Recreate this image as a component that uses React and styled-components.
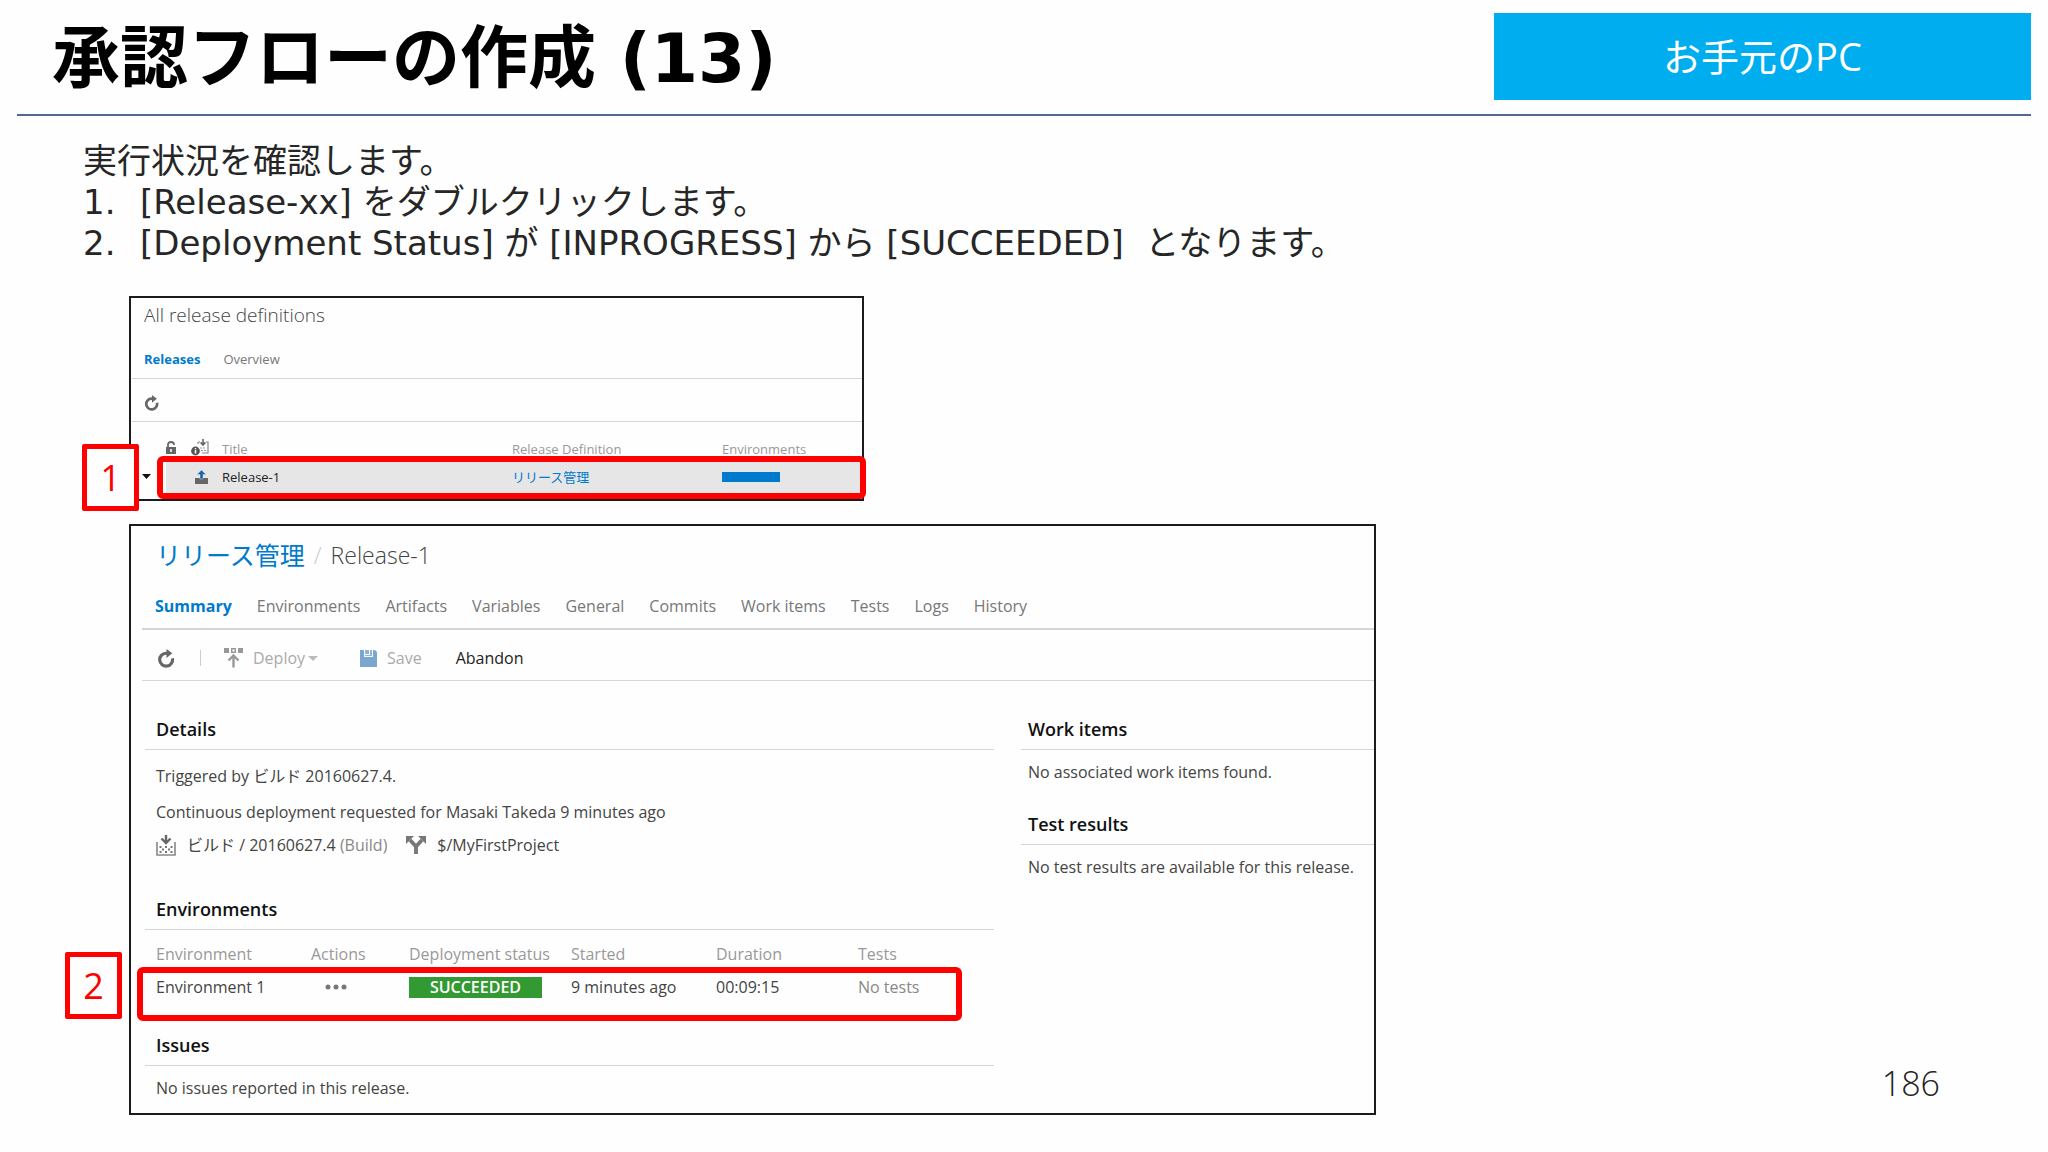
import React from 'react';
import styled, { createGlobalStyle } from 'styled-components';

const GlobalStyle = createGlobalStyle`
    :root {
        --uiFont: 'Open Sans', 'Noto Sans CJK JP', sans-serif;
        --slideFont: 'DejaVu Sans', 'Noto Sans CJK JP', sans-serif;
        --blue: #007acc;
        --red: #ff0000;
        --line: #d4d4da;
    }

    * { box-sizing: border-box; }

    body {
        margin: 0;
        background: #fefefe;
        color: #444;
        font-family: var(--uiFont);
        font-size: 16px;
    }

    h1, h2, h3, p, ol { margin: 0; padding: 0; }
    a { color: inherit; text-decoration: none; }

    button {
        border: 0;
        padding: 0;
        background: none;
        color: inherit;
        font: inherit;
    }

    svg { display: block; flex: none; }
`

const Header = styled.header`
    display: grid;
    grid-template-columns: 1477fr 537fr;
    margin: 0 17px;
    padding: 13px 0 14px;
    border-bottom: 2px solid #4f6a8c;
`
const Title = styled.h1`
    padding: 5px 0 0 35px;
    color: #000;
    font-family: var(--slideFont);
    font-size: 68px;
    line-height: 82px;
`
const Place = styled.div`
    background: #00aeef;
    color: #fff;
    font-size: 38px;
    line-height: 87px;
    text-align: center;
`
const Intro = styled.section`
    padding: 25px 83px 32px;
    color: #262626;
    font-family: var(--slideFont);
    font-size: 34px;
    line-height: 41px;
`
const Steps = styled.ol`
    list-style: none;

    li {
        display: flex;
        white-space: pre;
    }
`
const StepNumber = styled.span`
    width: 57px;
`
const Shots = styled.main`
    display: grid;
    grid-template-columns: 735fr 512fr 672fr;
    row-gap: 23px;
    padding-left: 129px;
`
const Panel = styled.section`
    grid-column: ${({ $wide }) => ($wide ? '1 / 3' : '1 / 2')};
    border: 2px solid #1c1c1e;
`
const ListTitle = styled.h2`
    padding-left: 13px;
    font-size: 19px;
    font-weight: 300;
    line-height: 34px;
`
const Tabs = styled.nav`
    display: flex;
    gap: ${({ $small }) => ($small ? '23px' : '25px')};
    margin-left: ${({ $small }) => ($small ? '1px' : '11px')};
    padding: ${({ $small }) => ($small ? '8px 12px 0' : '0 13px')};
    border-bottom: ${({ $small }) => ($small ? '1px' : '2px')} solid var(--line);
    font-size: ${({ $small }) => ($small ? '13px' : '16px')};
    line-height: ${({ $small }) => ($small ? '38px' : '44px')};
`
const Tab = styled.a`
    color: ${({ $active }) => ($active ? 'var(--blue)' : '#777')};
    font-weight: ${({ $active }) => ($active ? 700 : 400)};
`
const ListToolbar = styled.div`
    display: flex;
    margin-left: 1px;
    padding: 16px 12px 10px;
    border-bottom: 1px solid var(--line);
`
const TableArea = styled.div`
    position: relative;
`
const Table = styled.table`
    width: 100%;
    table-layout: fixed;
    border-collapse: collapse;
    text-align: left;

    th {
        padding: 0;
        color: #999;
        font-weight: 400;
    }

    td { padding: 0; }
`
const ReleaseTable = styled(Table)`
    margin-bottom: 6px;
    font-size: 13px;

    th {
        padding-top: 14px;
        height: 40px;
        line-height: 26px;
    }

    th svg { margin-bottom: 4px; }

    td {
        padding-bottom: 2px;
        height: 31px;
        color: #222;
        line-height: 28px;
    }

    td + td { background: #e6e6e6; }
    td + td svg { margin-left: 4px; }
    td a { color: var(--blue); }
`
const EnvTable = styled(Table)`
    th {
        padding-top: 9px;
        height: 39px;
        line-height: 30px;
    }

    td {
        height: 36px;
        line-height: 36px;
    }
`
const EnvArea = styled(TableArea)`
    padding: 0 0 20px 11px;
`
const EnvBar = styled.div`
    width: 58px;
    height: 10px;
    background: var(--blue);
`
const Status = styled.div`
    width: 133px;
    background: #339933;
    color: #fff;
    font-weight: 600;
    line-height: 21px;
    text-align: center;
`
const MutedCell = styled.td`
    color: #888;
`
const Highlight = styled.div`
    position: absolute;
    border: 6px solid var(--red);
    border-radius: 6px;
    pointer-events: none;
`
const ReleaseHighlight = styled(Highlight)`
    top: 34px;
    right: -4px;
    left: 26px;
    height: 43px;
`
const EnvHighlight = styled(Highlight)`
    top: 37px;
    right: 32px;
    left: -8px;
    height: 54px;
`
const Callout = styled.div`
    position: absolute;
    top: 22px;
    left: ${({ $left }) => $left};
    width: 57px;
    height: 67px;
    border: 5px solid var(--red);
    border-radius: 2px;
    background: #fefefe;
    color: var(--red);
    font-size: 36px;
    line-height: 57px;
    text-align: center;
`
const Breadcrumb = styled.h2`
    display: flex;
    gap: 9px;
    padding-left: 25px;
    font-size: 23px;
    font-weight: 300;
    line-height: 58px;

    a {
        color: var(--blue);
        font-size: 25px;
        font-weight: 400;
    }

    i {
        color: #ccc;
        font-style: normal;
    }
`
const Toolbar = styled.div`
    display: flex;
    align-items: center;
    height: 51px;
    margin-left: 11px;
    padding: 6px 15px 0;
    border-bottom: 1px solid var(--line);
`
const ToolButton = styled.button`
    display: flex;
    align-items: center;
    gap: ${({ $gap }) => $gap || '10px'};
    margin-right: ${({ $after }) => $after || '0'};
    color: ${({ disabled }) => (disabled ? '#aaa' : '#222')};
`
const ButtonLabel = styled.span`
    display: flex;
    align-items: center;
    gap: 3px;
`
const Divider = styled.span`
    width: 1px;
    height: 16px;
    margin-right: 23px;
    background: #ccc;
`
const Body = styled.div`
    display: grid;
    grid-template-columns: 849fr 353fr;
    column-gap: 27px;
    padding: 28px 0 7px 14px;
`
const Heading = styled.h3`
    padding-left: ${({ $side }) => ($side ? '7px' : '11px')};
    border-bottom: 1px solid var(--line);
    color: #111;
    font-size: 18px;
    font-weight: 600;
    line-height: 40px;
`
const Details = styled.div`
    padding: 8px 0 29px 11px;
    line-height: 36px;
`
const Artifacts = styled.div`
    display: flex;
    align-items: center;
    line-height: 30px;

    svg { margin-right: 11px; }
    small { color: #888; font-size: 16px; }
    span { margin-right: 19px; }
`
const Note = styled.p`
    padding: 4px 0 14px ${({ $side }) => ($side ? '7px' : '11px')};
    line-height: 36px;
`
const IssueNote = styled(Note)`
    padding-bottom: 0;
`
const PageNumber = styled.footer`
    align-self: end;
    padding: 0 108px 8px 0;
    color: #222;
    font-size: 34px;
    font-weight: 300;
    line-height: 48px;
    text-align: right;
`

const RefreshIcon = ({ size }) => (
    <svg width={size} height={size} viewBox="0 0 18 18" fill="none">
        <path d="M9.500 4H8.500A6.100 6.100 0 1 0 14.600 8.800" stroke="#666" strokeWidth="3" />
        <path d="M9 0l5.500 4.100L9 8.600z" fill="#666" />
    </svg>
)

const LockIcon = () => (
    <svg width="10" height="13" viewBox="0 0 10 13">
        <path d="M2 6V3.600Q2 1 5 1t3 2.600V4" fill="none" stroke="#666" strokeWidth="1.800" />
        <path d="M0 6h10v7H0z" fill="#666" />
        <path d="M4 8h2v3H4z" fill="#ddd" />
    </svg>
)

const BuildInfoIcon = () => (
    <svg width="18" height="17" viewBox="0 0 18 17">
        <path d="M7 5V3M7 3h2M15 3h2v11h-6" fill="none" stroke="#888" strokeWidth="1.200" />
        <path d="M12 0v5M9.600 3.400L12 6l2.400-2.600" fill="none" stroke="#666" strokeWidth="1.600" />
        <path d="M9 9h6M10 11.500h5" stroke="#999" strokeWidth="1.200" strokeDasharray="2 1" />
        <circle cx="4.500" cy="12" r="4.400" fill="#555" />
        <path d="M4.500 9v1.300M4.500 11v3.600" stroke="#fff" strokeWidth="1.500" />
    </svg>
)

const UploadIcon = () => (
    <svg width="13" height="14" viewBox="0 0 13 14">
        <path d="M0 8h13v6H0z" fill="#666" />
        <path d="M6.500 0l4.500 4.500H8V9H5V4.500H2z" fill="#1467ad" stroke="#e6e6e6" strokeWidth=".4" />
    </svg>
)

const DeployIcon = () => (
    <svg width="19" height="20" viewBox="0 0 19 20">
        <path d="M0 0h5v5H0zM14 0h5v5h-5z" fill="#999" />
        <path d="M7.700.7h3.600v3.600H7.700z" fill="none" stroke="#999" strokeWidth="1.400" />
        <path d="M9.500 19.500V8.500M4.500 12.500l5-5 5 5" fill="none" stroke="#999" strokeWidth="2.400" />
    </svg>
)

const SaveIcon = () => (
    <svg width="17" height="17" viewBox="0 0 17 17">
        <path d="M0 0h4v7h9V0h2l2 2v15H0z" fill="#7ba6cf" />
        <path d="M5 0h4v4H5zM10 0h2v6H5V5h5z" fill="#8fb4d8" />
    </svg>
)

const BuildIcon = () => (
    <svg width="20" height="21" viewBox="0 0 20 21">
        <path d="M1 7v13h18V7" fill="none" stroke="#888" strokeWidth="1.600" />
        <path d="M10 0v7M5.500 3.500L10 8l4.500-4.500" fill="none" stroke="#666" strokeWidth="2.400" />
        <path
            d="M3.500 11h2v2h-2zM9 11h2v2H9zM14.500 11h2v2h-2zM6 13.500h2v2H6zM12 13.500h2v2h-2zM3.500 16h2v2h-2zM9 16h2v2H9zM14.500 16h2v2h-2z"
            fill="#777"
        />
    </svg>
)

const BranchIcon = () => (
    <svg width="20" height="18" viewBox="0 0 20 18">
        <path d="M4 4l6 6.500L16 4M10 9.500V18" fill="none" stroke="#777" strokeWidth="3.800" />
        <path d="M0 0h8L0 8zM20 0h-8l8 8z" fill="#777" />
    </svg>
)

const DotsIcon = () => (
    <svg width="22" height="6" viewBox="0 0 22 6" fill="#777">
        <circle cx="3" cy="3" r="2.500" />
        <circle cx="11" cy="3" r="2.500" />
        <circle cx="19" cy="3" r="2.500" />
    </svg>
)

const ActionsButton = styled.button`
    display: block;
    margin-left: 14px;
`

const steps = [
    '[Release-xx] をダブルクリックします。',
    '[Deployment Status] が [INPROGRESS] から [SUCCEEDED]  となります。',
];

const releaseTabs = [
    'Summary', 'Environments', 'Artifacts', 'Variables', 'General',
    'Commits', 'Work items', 'Tests', 'Logs', 'History',
];

const ReleaseList = () => (
    <Panel>
        <ListTitle>All release definitions</ListTitle>
        <Tabs $small>
            <Tab href="#releases" $active>Releases</Tab>
            <Tab href="#overview">Overview</Tab>
        </Tabs>
        <ListToolbar>
            <button aria-label="Refresh"><RefreshIcon size={16} /></button>
        </ListToolbar>
        <TableArea>
            <ReleaseTable>
                <colgroup>
                    <col width="35" />
                    <col width="25" />
                    <col width="31" />
                    <col width="290" />
                    <col width="210" />
                    <col />
                </colgroup>
                <thead>
                    <tr>
                        <th></th>
                        <th><LockIcon /></th>
                        <th><BuildInfoIcon /></th>
                        <th>Title</th>
                        <th>Release Definition</th>
                        <th>Environments</th>
                    </tr>
                </thead>
                <tbody>
                    <tr>
                        <td>
                            <svg width="20" height="5" viewBox="0 0 20 5">
                                <path d="M11 0h9l-4.500 5z" fill="#111" />
                            </svg>
                        </td>
                        <td></td>
                        <td><UploadIcon /></td>
                        <td>Release-1</td>
                        <td><a href="#definition">リリース管理</a></td>
                        <td><EnvBar /></td>
                    </tr>
                </tbody>
            </ReleaseTable>
            <ReleaseHighlight />
            <Callout $left="-49px">1</Callout>
        </TableArea>
    </Panel>
)

const ReleaseSummary = () => (
    <Panel $wide>
        <Breadcrumb>
            <a href="#definition">リリース管理</a>
            <i>/</i>
            <span>Release-1</span>
        </Breadcrumb>
        <Tabs>
            {releaseTabs.map((name, index) => (
                <Tab key={name} href="#tab" $active={index === 0}>{name}</Tab>
            ))}
        </Tabs>
        <Toolbar>
            <ToolButton $after="24px" aria-label="Refresh"><RefreshIcon size={19} /></ToolButton>
            <Divider />
            <ToolButton $after="42px" disabled>
                <DeployIcon />
                <ButtonLabel>
                    Deploy
                    <svg width="10" height="5" viewBox="0 0 10 5">
                        <path d="M0 0h10L5 5z" fill="#bbb" />
                    </svg>
                </ButtonLabel>
            </ToolButton>
            <ToolButton $after="34px" disabled><SaveIcon />Save</ToolButton>
            <ToolButton>Abandon</ToolButton>
        </Toolbar>
        <Body>
            <div>
                <Heading>Details</Heading>
                <Details>
                    <p>Triggered by ビルド 20160627.4.</p>
                    <p>Continuous deployment requested for Masaki Takeda 9 minutes ago</p>
                    <Artifacts>
                        <BuildIcon />
                        <span>ビルド / 20160627.4 <small>(Build)</small></span>
                        <BranchIcon />
                        $/MyFirstProject
                    </Artifacts>
                </Details>
                <Heading>Environments</Heading>
                <EnvArea>
                    <EnvTable>
                        <colgroup>
                            <col width="155" />
                            <col width="98" />
                            <col width="162" />
                            <col width="145" />
                            <col width="142" />
                            <col />
                        </colgroup>
                        <thead>
                            <tr>
                                <th>Environment</th>
                                <th>Actions</th>
                                <th>Deployment status</th>
                                <th>Started</th>
                                <th>Duration</th>
                                <th>Tests</th>
                            </tr>
                        </thead>
                        <tbody>
                            <tr>
                                <td>Environment 1</td>
                                <td><ActionsButton aria-label="Actions"><DotsIcon /></ActionsButton></td>
                                <td><Status>SUCCEEDED</Status></td>
                                <td>9 minutes ago</td>
                                <td>00:09:15</td>
                                <MutedCell>No tests</MutedCell>
                            </tr>
                        </tbody>
                    </EnvTable>
                    <EnvHighlight />
                    <Callout $left="-80px">2</Callout>
                </EnvArea>
                <Heading>Issues</Heading>
                <IssueNote>No issues reported in this release.</IssueNote>
            </div>
            <div>
                <Heading $side>Work items</Heading>
                <Note $side>No associated work items found.</Note>
                <Heading $side>Test results</Heading>
                <Note $side>No test results are available for this release.</Note>
            </div>
        </Body>
    </Panel>
)

const App = () => {
    return (
        <>
            <GlobalStyle />
            <Header>
                <Title>承認フローの作成 (13)</Title>
                <Place>お手元のPC</Place>
            </Header>
            <Intro>
                <p>実行状況を確認します。</p>
                <Steps>
                    {steps.map((step, index) => (
                        <li key={step}>
                            <StepNumber>{index + 1}.</StepNumber>
                            <span>{step}</span>
                        </li>
                    ))}
                </Steps>
            </Intro>
            <Shots>
                <ReleaseList />
                <ReleaseSummary />
                <PageNumber>186</PageNumber>
            </Shots>
        </>
    )
}

export default App;
